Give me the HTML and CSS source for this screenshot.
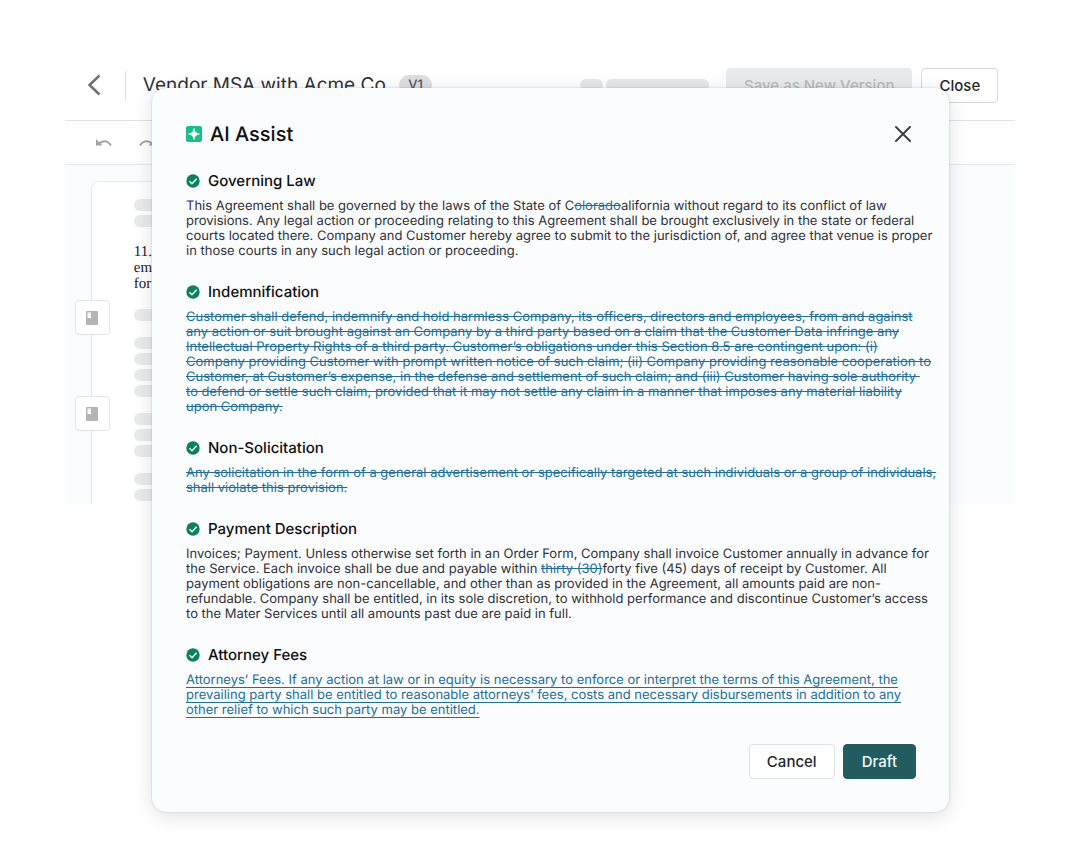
FILE: index.html
```html
<!DOCTYPE html>
<html lang="en">
<head>
    <meta charset="UTF-8">
    <meta name="viewport" content="width=device-width, initial-scale=1.0">
    <title>Vendor MSA with Acme Co.</title>
    <link rel="stylesheet" href="styles.css">
</head>
<body>
    <div class="editor">
        <header class="editor-header">
            <button class="icon-btn back-btn" aria-label="Back">
                <svg width="14" height="22" viewBox="0 0 14 22" fill="none" stroke="#6f7072" stroke-width="2.500"><path d="M12.500 1.500L2.500 11l10 9.500"/></svg>
            </button>
            <div class="doc-name">Vendor MSA with Acme Co.</div>
            <span class="version">V1</span>
            <div class="header-actions">
                <span class="chip chip-small"></span>
                <span class="chip"></span>
                <button class="btn btn-disabled" disabled>Save as New Version</button>
                <button class="btn btn-close">Close</button>
            </div>
        </header>

        <div class="toolbar">
            <button class="icon-btn" aria-label="Undo">
                <svg width="18" height="10" viewBox="0 0 18 10"><path d="M4 5.500Q11.500 .2 16 7.500" fill="none" stroke="#a2a3a5" stroke-width="1.800"/><path d="M1 1v6.500h6.500z" fill="#a2a3a5"/></svg>
            </button>
            <button class="icon-btn" aria-label="Redo">
                <svg width="18" height="10" viewBox="0 0 18 10"><path d="M2 7.500Q6.500 .2 14 5.500" fill="none" stroke="#a2a3a5" stroke-width="1.800"/><path d="M17 1v6.500h-6.500z" fill="#a2a3a5"/></svg>
            </button>
        </div>

        <div class="workspace">
            <div class="page">
                <div class="bars"><i></i><i></i></div>
                <p class="page-text">11.<br>em<br>for</p>
                <div class="bars"><i></i></div>
                <div class="bars"><i></i><i></i><i></i><i></i></div>
                <div class="bars"><i></i><i></i><i></i></div>
                <div class="bars"><i></i><i></i></div>
            </div>
            <div class="markers">
                <button class="marker" aria-label="Clause">
                    <svg width="12" height="14" viewBox="0 0 12 14"><rect width="12" height="14" rx="1" fill="#b5b5b6"/><path d="M1.500 1.500h3.500v5.500H1.500z" fill="#fff"/></svg>
                </button>
                <button class="marker" aria-label="Clause">
                    <svg width="12" height="14" viewBox="0 0 12 14"><rect width="12" height="14" rx="1" fill="#b5b5b6"/><path d="M1.500 1.500h3.500v5.500H1.500z" fill="#fff"/></svg>
                </button>
            </div>
        </div>
    </div>

    <div class="modal" role="dialog" aria-labelledby="modal-title">
        <div class="modal-header">
            <svg width="16" height="16" viewBox="0 0 16 16"><rect width="16" height="16" rx="2" fill="#1abf86"/><path d="M8 2.500Q8.600 7.400 13.500 8 8.600 8.600 8 13.500 7.400 8.600 2.500 8 7.400 7.400 8 2.500z" fill="#fff" stroke="#fff" stroke-width=".6"/></svg>
            <h1 id="modal-title">AI Assist</h1>
            <button class="icon-btn dismiss" aria-label="Dismiss">
                <svg width="16" height="16" viewBox="0 0 16 16" stroke="#3e4044" stroke-width="2" stroke-linecap="round"><path d="M1 1l14 14M15 1L1 15"/></svg>
            </button>
        </div>

        <section class="clause">
            <h2><svg class="check" viewBox="0 0 14 14"><circle cx="7" cy="7" r="6.700" fill="#11805a"/><path d="M3.500 7.200l2.500 2.500 4.700-5" fill="none" stroke="#d9fff0" stroke-width="1.500"/></svg>Governing Law</h2>
            <p>This Agreement shall be governed by the laws of the State of C<del>olorado</del>alifornia without regard to its conflict of law<br>
            provisions. Any legal action or proceeding relating to this Agreement shall be brought exclusively in the state or federal<br>
            courts located there. Company and Customer hereby agree to submit to the jurisdiction of, and agree that venue is proper<br>
            in those courts in any such legal action or proceeding.</p>
        </section>

        <section class="clause">
            <h2><svg class="check" viewBox="0 0 14 14"><circle cx="7" cy="7" r="6.700" fill="#11805a"/><path d="M3.500 7.200l2.500 2.500 4.700-5" fill="none" stroke="#d9fff0" stroke-width="1.500"/></svg>Indemnification</h2>
            <p><del>Customer shall defend, indemnify and hold harmless Company, its officers, directors and employees, from and against<br>
            any action or suit brought against an Company by a third party based on a claim that the Customer Data infringe any<br>
            Intellectual Property Rights of a third party. Customer’s obligations under this Section 8.5 are contingent upon: (i)<br>
            Company providing Customer with prompt written notice of such claim; (ii) Company providing reasonable cooperation to<br>
            Customer, at Customer’s expense, in the defense and settlement of such claim; and (iii) Customer having sole authority&nbsp;<br>
            to defend or settle such claim, provided that it may not settle any claim in a manner that imposes any material liability<br>
            upon Company.</del></p>
        </section>

        <section class="clause">
            <h2><svg class="check" viewBox="0 0 14 14"><circle cx="7" cy="7" r="6.700" fill="#11805a"/><path d="M3.500 7.200l2.500 2.500 4.700-5" fill="none" stroke="#d9fff0" stroke-width="1.500"/></svg>Non-Solicitation</h2>
            <p><del>Any solicitation in the form of a general advertisement or specifically targeted at such individuals or a group of individuals,<br>
            shall violate this provision.</del></p>
        </section>

        <section class="clause">
            <h2><svg class="check" viewBox="0 0 14 14"><circle cx="7" cy="7" r="6.700" fill="#11805a"/><path d="M3.500 7.200l2.500 2.500 4.700-5" fill="none" stroke="#d9fff0" stroke-width="1.500"/></svg>Payment Description</h2>
            <p>Invoices; Payment. Unless otherwise set forth in an Order Form, Company shall invoice Customer annually in advance for<br>
            the Service. Each invoice shall be due and payable within <del>thirty (30)</del>forty five (45) days of receipt by Customer. All<br>
            payment obligations are non-cancellable, and other than as provided in the Agreement, all amounts paid are non-<br>
            refundable. Company shall be entitled, in its sole discretion, to withhold performance and discontinue Customer’s access<br>
            to the Mater Services until all amounts past due are paid in full.</p>
        </section>

        <section class="clause">
            <h2><svg class="check" viewBox="0 0 14 14"><circle cx="7" cy="7" r="6.700" fill="#11805a"/><path d="M3.500 7.200l2.500 2.500 4.700-5" fill="none" stroke="#d9fff0" stroke-width="1.500"/></svg>Attorney Fees</h2>
            <p><ins>Attorneys’ Fees. If any action at law or in equity is necessary to enforce or interpret the terms of this Agreement, the<br>
            prevailing party shall be entitled to reasonable attorneys’ fees, costs and necessary disbursements in addition to any<br>
            other relief to which such party may be entitled.</ins></p>
        </section>

        <div class="modal-footer">
            <button class="btn btn-cancel">Cancel</button>
            <button class="btn btn-primary">Draft</button>
        </div>
    </div>
</body>
</html>
```
FILE: styles.css
```css
* {
    box-sizing: border-box;
}
body {
    margin: 0;
    position: relative;
    min-height: 100vh;
    background: #fff;
    color: #2f3136;
    font-family: Inter, "Liberation Sans", sans-serif;
    text-rendering: geometricPrecision;
}
.editor {
    padding: 50px 6% 0;
}
.editor-header {
    display: flex;
    align-items: center;
    height: 71px;
    padding: 0 17px 0 22px;
    border-bottom: 1px solid #e0e1e2;
}
.icon-btn {
    display: flex;
    padding: 0;
    border: none;
    background: none;
    cursor: pointer;
}
.back-btn {
    margin-right: 24px;
}
.doc-name {
    padding-left: 17px;
    border-left: 1px solid #dcdcde;
    font-size: 19px;
    line-height: 28px;
    white-space: nowrap;
}
.version {
    margin-left: 8px;
    padding: 0 9px;
    border-radius: 10px;
    background: #dddee2;
    color: #55565c;
    font-size: 13px;
    font-weight: 500;
    line-height: 20px;
}
.header-actions {
    display: flex;
    align-items: center;
    margin-left: auto;
}
.chip {
    width: 103px;
    height: 12px;
    margin-right: 17px;
    border-radius: 6px;
    background: #e6e7e9;
}
.chip-small {
    width: 23px;
    margin-right: 3px;
}
.btn {
    height: 35px;
    padding: 0 17px;
    border: 1px solid #dfe1e4;
    border-radius: 4px;
    background: #fff;
    color: #26272b;
    font-family: inherit;
    font-size: 15px;
    font-weight: 500;
    cursor: pointer;
}
.btn-disabled {
    margin-right: 9px;
    border-color: #e9eaec;
    background: #e9eaec;
    color: #b8babd;
}
.btn-close {
    border-color: #d6d8da;
}
.toolbar {
    display: flex;
    align-items: center;
    gap: 25px;
    height: 44px;
    padding: 0 30px;
    border-bottom: 1px solid #e6e8ea;
}
.workspace {
    position: relative;
    height: 339px;
    padding: 16px 120px 0 26px;
    background: #fafcfd;
    overflow: hidden;
}
.page {
    padding: 17px 42px;
    border: 1px solid #e6e9ec;
    border-radius: 8px 8px 0 0;
    background: #fff;
}
.bars {
    display: flex;
    flex-direction: column;
    gap: 4px;
    margin-bottom: 16px;
}
.bars i {
    height: 12px;
    border-radius: 6px;
    background: #e9eaeb;
}
.page-text {
    margin: 17px 0;
    color: #1c1c1c;
    font-family: "Liberation Serif", serif;
    font-size: 15px;
    line-height: 16px;
}
/* clause markers sit over the left edge of the page */
.markers {
    position: absolute;
    top: 135px;
    left: 10px;
    display: flex;
    flex-direction: column;
    gap: 61px;
}
.marker {
    display: flex;
    align-items: center;
    justify-content: center;
    width: 35px;
    height: 35px;
    padding: 0;
    border: 1px solid #e4e5e7;
    border-radius: 4px;
    background: #fff;
}
.modal {
    position: absolute;
    top: 88px;
    left: 152px;
    right: 131px;
    padding: 34px 33px 33px 34px;
    border-radius: 14px;
    background: #fbfcfe;
    box-shadow: 0 0 2px rgba(20, 40, 60, 0.25), 0 4px 20px rgba(0, 0, 0, 0.12);
}
.modal-header {
    display: flex;
    align-items: center;
    gap: 8px;
    height: 24px;
    margin-bottom: 24px;
}
.modal-header h1 {
    margin: 0;
    color: #111;
    font-size: 20px;
    font-weight: 500;
    line-height: 24px;
}
.dismiss {
    margin-left: auto;
    margin-right: 5px;
}
.clause {
    margin-bottom: 22px;
}
.clause h2 {
    display: flex;
    align-items: center;
    gap: 8px;
    margin: 0 0 7px;
    color: #111;
    font-size: 15px;
    font-weight: 500;
    line-height: 22px;
}
.check {
    width: 14px;
    height: 14px;
}
.clause p {
    margin: 0;
    font-size: 13px;
    line-height: 15px;
    white-space: nowrap;
}
.clause del,
.clause ins {
    color: #226f96;
}
.clause ins {
    text-underline-offset: 3px;
}
.modal-footer {
    display: flex;
    justify-content: flex-end;
    gap: 8px;
    margin-top: 26px;
}
.btn-primary {
    padding: 0 18px;
    border-color: #225c60;
    background: #225c60;
    color: #f2fafa;
}
```
